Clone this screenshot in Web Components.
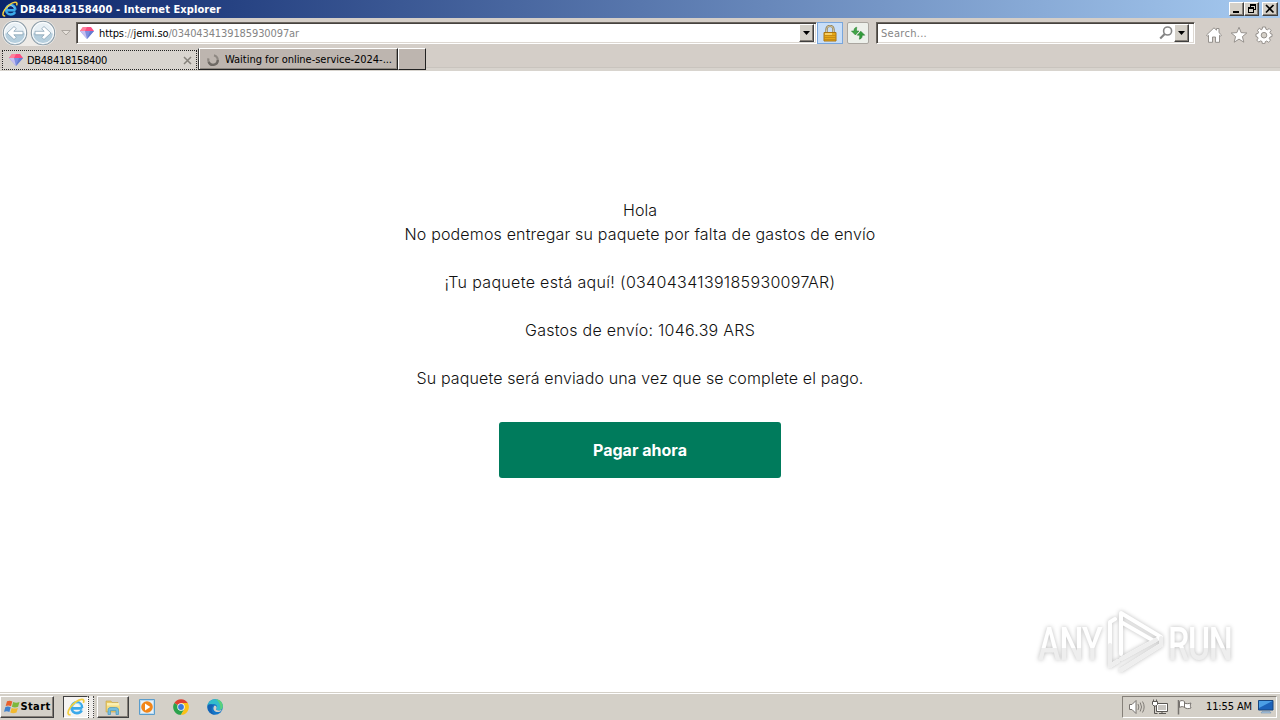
<!DOCTYPE html>
<html lang="es">
<head>
<meta charset="utf-8">
<title>DB48418158400 - Internet Explorer</title>
<style>
html, body { margin: 0; height: 100%; overflow: hidden; background: #fff; }
</style>
</head>
<body>
<desktop-screen></desktop-screen>
<script>
// ICONS {{{1

// Each entry is [viewBox, markup]
const ICONS = {
    ie: ['0 0 16 16', `
        <path d="M13.6 9.2H4.9M13.4 8.8c0-3-2-4.9-4.6-4.9S4 6 4 8.7s2 4.800 4.800 4.800c2 0 3.500-.9 4.300-2.400" fill="none" stroke="#3ba9ea" stroke-width="2.400"/>
        <path d="M5 7.700c.4-2 1.700-3 3.600-3s3.200 1 3.500 3" fill="none" stroke="#a4e4ff" stroke-width=".9"/>
        <path d="M3.200 14.800C.3 15.400.2 12.400 2.700 8.700 5.300 4.700 10 1.400 13 1.200c2-.1 2.400 1.300 1.500 3.200" fill="none" stroke="#f3ce3d" stroke-width="1.500"/>`],
    gem: ['0 0 16 14', `
        <path d="M4 1h8l3 4H1z" fill="#fb4d82"/><path d="M4 1 1 5h5l2-4z" fill="#ff7f9b"/>
        <path d="M1 5h14l-7 8z" fill="#7e8fe0"/><path d="M1 5h5l2 8z" fill="#c7bff0"/><path d="M11 5h4l-7 8z" fill="#657bd0"/>`],
    back: ['0 0 26 26', `
        <circle cx="13" cy="13" r="11.700" fill="#e8f0f5" stroke="#8a9aa5" stroke-width="1.100"/>
        <path d="M2.500 14a10.500 10.500 0 0 0 21 0c-5-3-15-3-21 0z" fill="#b5cedd"/>
        <circle cx="13" cy="13" r="10.500" fill="none" stroke="#fff" stroke-width="1"/>
        <path d="m5 13 7-6.500 2.400 2.300-2.600 2.500H21v3.500h-9.200l2.600 2.500L12 19.500z" fill="#fff" stroke="#8aa5b6" stroke-width=".8"/>`],
    down: ['0 0 10 6', '<path d="M.7.5h8.600L5 5z" fill="#e7e2dc" stroke="#aaa59f"/>'],
    caret: ['0 0 7 4', '<path d="M0 0h7L3.500 4z" fill="#000"/>'],
    lock: ['0 0 16 17', `
        <path d="M4.500 8V4.400a3.500 3.500 0 0 1 7 0V8" fill="none" stroke="#8b7a53" stroke-width="2.300"/>
        <path d="M4.500 8V4.400a3.500 3.500 0 0 1 7 0V8" fill="none" stroke="#e7dcb4" stroke-width=".8"/>
        <path d="M2 7.500h12v8.500H2z" fill="#e6a817" stroke="#aa7410"/><path d="M3 8.300h7v1.400H3z" fill="#ffe084"/>
        <path d="M2.500 10.500h11m-11 2h11m-11 2h11" stroke="#ba8014" stroke-width=".7"/>`],
    refresh: ['0 0 16 16', `
        <path d="M6.800 2.200C4.300 2.500 3.900 4.500 4 6H1.400l4 4L9 6H6.500c0-1.500 0-2.500.3-3.800z" fill="#42a448" stroke="#277d31" stroke-width=".5"/>
        <path d="M9.300 14.200c2.500-.3 3-2.300 2.900-4h2.600l-4-4-3.600 4h2.500c0 1.600 0 2.600-.4 4z" fill="#319c3b" stroke="#20752a" stroke-width=".5"/>`],
    search: ['0 0 16 16', `
        <circle cx="9.600" cy="6" r="4" fill="#fff" stroke="#858585" stroke-width="1.600"/>
        <path d="m6.700 9-4.500 4.500" stroke="#858585" stroke-width="2.200"/>`],
    home: ['0 0 18 18', '<path d="M1.500 9 9 1.800l2.500 2.400V2.500H14v4.200L16.500 9l-1 1.200-1-.9v7H10.500V11h-3v5.300h-4v-7l-1 .9z" fill="#fff" stroke="#8c8883" stroke-width=".9"/>'],
    star: ['0 0 18 18', '<path d="m9 1.300 2.100 5.300 5.700.4-4.400 3.600 1.400 5.600L9 13.100l-4.800 3.100 1.400-5.600L1.200 7l5.700-.4z" fill="#fff" stroke="#8c8883" stroke-width=".9"/>'],
    gear: ['0 0 18 18', `
        <path d="m7.500 1 3 0 .4 2.200 1.400.6 1.900-1.300 1.900 2-1.200 1.800.6 1.400L17 8v2.500l-2 .5-.7 1.500 1.200 1.800-2 1.900-1.800-1.200-1.400.6-.5 2H7.300L7 15.500l-1.500-.6-1.800 1.200-1.900-2L3 12.400 2.500 11 1 10.500V7.900l2-.4.600-1.400-1.200-1.800 2-1.900 1.800 1.300 1-.5z" fill="#fff" stroke="#8c8883" stroke-width=".9"/>
        <circle cx="9" cy="9.200" r="2.800" fill="#d4d0c8" stroke="#8c8883" stroke-width=".9"/>`],
    close: ['0 0 9 9', '<path d="m1 1 7 7m0-7L1 8" stroke="#85817b" stroke-width="1.500"/>'],
    spinner: ['0 0 14 14', `
        <path d="M8 2.300a4.800 4.800 0 1 1-5.500 3" fill="none" stroke="#8f8983" stroke-width="2.200"/>
        <path d="M11.800 7A4.800 4.800 0 0 1 2.600 9" fill="none" stroke="#6e6964" stroke-width="2.200"/>`],
    minimize: ['0 0 10 10', '<path d="M1 7h6v2H1z"/>'],
    restore: ['0 0 10 10', '<path d="M3 0h6v6H7V5h1V2H4v1H3z"/><path d="M1 3h6v6H1zm1 2v3h4V5z" fill-rule="evenodd"/>'],
    cross: ['0 0 10 10', '<path d="m1 1 7.500 7.500m0-7.500L1 8.500" stroke="#000" stroke-width="1.700"/>'],
    windows: ['0 0 17 16', `
        <path d="M3 2.300c2-1 3.800-.8 5.300.2L7 7.300C5.300 6.300 3.600 6.300 1.700 7z" fill="#e8602c"/>
        <path d="M9.200 3c2 1 4 1 6.300 0l-1.400 4.800c-2.200 1-4.300.9-6.200 0z" fill="#7db83c"/>
        <path d="M1.400 8c2-.9 3.700-.6 5.300.3L5.400 13C3.700 12 2 12 0 12.800z" fill="#3f82ce"/>
        <path d="M7.700 8.900c2 .9 4 .9 6.200 0l-1.400 4.700c-2.300 1-4.300 1-6.200 0z" fill="#f2b92e"/>`],
    explorer: ['0 0 18 16', `
        <path d="M2 2h5l1 1.500h6V13H2z" fill="#e8c864" stroke="#c7a545" stroke-width=".6"/>
        <path d="M3 4h12v8H3z" fill="#fbefb0"/><path d="M3 6.500h13V12H3z" fill="#f5dc83"/>
        <path d="M4 15.500V11c0-2 1.400-2.500 3-2.500h4.500c2 0 3 .8 3 2.500v4.500H12v-4H6.500v4z" fill="#74bddd" stroke="#4795bd" stroke-width=".7"/>`],
    player: ['0 0 16 16', `
        <path d="M.5.500h15v15H.500z" fill="#bcdaf0" stroke="#5a9dcc"/><path d="M2 2h12v12H2z" fill="#e6f1f9"/>
        <circle cx="8" cy="8" r="5.800" fill="#f28518"/><path d="m6 4.600 5.300 3.400L6 11.400z" fill="#fff"/>`],
    chrome: ['0 0 16 16', `
        <path d="M8 8 1.240 4.100A7.800 7.800 0 0 1 14.760 4.100L15 8z" fill="#df4030"/>
        <path d="M8 8h-.1L1.240 4.100A7.800 7.800 0 0 0 8 15.800l3.400-5.900z" fill="#2ba24c"/>
        <path d="M8 15.800A7.800 7.800 0 0 0 14.760 4.100H8L11.400 10z" fill="#fbc116"/>
        <circle cx="8" cy="8" r="3.700" fill="#fff"/><circle cx="8" cy="8" r="2.900" fill="#3b79dc"/>`],
    edge: ['0 0 16 16', `
        <circle cx="8" cy="8" r="7.800" fill="#1476c9"/>
        <path d="M.4 7C1.200 2.800 4.200.2 8.200.2c4.400 0 7.600 3.200 7.600 6.700 0 2.700-2 4.300-4.200 4.300-1.800 0-2.800-.7-2.200-1.500 1.700-2.500-.2-4.700-3-4.700C3.700 5 1.500 5.700.4 7z" fill="#32bccb"/>
        <path d="M9 .3c4.200.2 6.800 3.400 6.800 6.600 0 2-1 3.500-2.700 4C14 7 12.500 3 9 .3z" fill="#5bd17b"/>
        <path d="M9.300 9.800C8.600 10.700 10 11.600 12 11.500c1 0 2-.3 2.800-.8-.7 1.500-2 2.300-4 2.300-3 0-4.800-2-4.300-4.500.2-1 .7-1.600 1.300-1.900 1.600.3 2.400 1.800 1.500 3.200z" fill="#d4d0c8"/>
        <path d="M1 5.800c-1.400 5 2 9.800 7 10C4.500 14 3 9 6.500 6.500 4.700 5 2.500 4.800 1 5.800z" fill="#1662b2"/>`],
    volume: ['0 0 18 16', `
        <path d="M1.500 5.500h2.500L8 1.500v13l-4-4H1.500z" fill="#fff" stroke="#77736f"/>
        <path d="M10 5q1.700 3 0 6M12.200 3.500q2.700 4.500 0 9M14.500 2.500q3.300 5.500 0 11" fill="none" stroke="#807c77"/>`],
    network: ['0 0 18 16', `
        <path d="M4.500 4.500h11v8h-11z" fill="#fff" stroke="#5a5753"/><path d="M6 6h8v5H6z" fill="#c8c5c0"/>
        <path d="M7 14.500h7m-4-2v2M2.500 7v7.500h3" fill="none" stroke="#5a5753"/>
        <path d="M.5 2.500h5v3l-1.500 1.500h-2L.500 5.500z" fill="#fff" stroke="#5a5753"/>
        <path d="M1.500.5v2m3-2v2" stroke="#5a5753"/>`],
    flag: ['0 0 18 16', `
        <path d="M3.500 2.500c2-1.500 3.500-1 5 0v6c-1.500-1.200-3-1.200-5 0zM8.500 4c2 1 4 .8 6.500 0-.8 1.500-1 2.500 0 5-2.500 1-4.500.8-6.500-.5z" fill="#fff" stroke="#77736f"/>
        <path d="M2.500 1v14.500" stroke="#77736f" stroke-width="1.500"/>`],
    monitor: ['0 0 16 14', `
        <path d="M.5.500h14.500v9.500H.500z" fill="#1c62ba" stroke="#17447e"/><path d="M1 1h13.500L1 8z" fill="#4b9ee5"/>
        <path d="M4 11.500h8l1 1.500H3z" fill="#a6c2de" stroke="#698aab" stroke-width=".5"/>`],
};

// class UiIcon {{{1

class UiIcon extends HTMLElement {
    connectedCallback() {
        const [box, markup] = ICONS[this.getAttribute('name')];
        const [, , w, h] = box.split(' ');
        const width = this.getAttribute('width') || w;
        const height = this.getAttribute('height') || h;
        this.attachShadow({ mode: 'open' }).innerHTML = `
            <style>
            :host { display: block; flex: none; width: ${width}px; height: ${height}px; }
            svg { display: block; width: 100%; height: 100%; }
            </style>
            <svg viewBox="${box}">${markup}</svg>`;
    }
}

// class FitText {{{1

// One line of text, spaced so that it takes up the width attribute exactly
class FitText extends HTMLElement {
    connectedCallback() {
        this.attachShadow({ mode: 'open' }).innerHTML = `
            <style>
            :host { display: block; flex: none; width: ${this.getAttribute('width')}px; white-space: nowrap; }
            span { display: inline-block; }
            </style>
            <span><slot></slot></span>`;
        const span = this.shadowRoot.querySelector('span');
        const spare = this.getAttribute('width') - span.getBoundingClientRect().width;
        span.style.letterSpacing = `${spare / this.textContent.length}px`;
    }
}

// class BevelButton {{{1

class BevelButton extends HTMLElement {
    connectedCallback() {
        this.attachShadow({ mode: 'open' }).innerHTML = `
            <style>
            :host {
                display: flex;
                flex: none;
                box-sizing: border-box;
                align-items: center;
                justify-content: center;
                background: #d4d0c8;
                border: 1px solid;
                border-color: #fff #404040 #404040 #fff;
                box-shadow: inset -1px -1px #868079;
            }
            </style>
            <slot></slot>`;
    }
}

// class TitleBar {{{1

class TitleBar extends HTMLElement {
    connectedCallback() {
        this.attachShadow({ mode: 'open' }).innerHTML = `
            <style>
            :host {
                display: flex;
                box-sizing: border-box;
                height: 18px;
                padding: 0 2px;
                align-items: center;
                color: #fff;
                background: linear-gradient(to right, #0a246a, #a6caf0);
                font-weight: bold;
            }
            fit-text { margin: 1px 0 0 2px; }
            .buttons { display: flex; margin-left: auto; }
            bevel-button { width: 15px; height: 14px; }
            bevel-button:last-child { margin-left: 3px; width: 16px; }
            </style>
            <ui-icon name="ie" width="16" height="16"></ui-icon>
            <fit-text width="201">DB48418158400 - Internet Explorer</fit-text>
            <div class="buttons">
                <bevel-button><ui-icon name="minimize"></ui-icon></bevel-button>
                <bevel-button><ui-icon name="restore"></ui-icon></bevel-button>
                <bevel-button><ui-icon name="cross"></ui-icon></bevel-button>
            </div>`;
    }
}

// class AddressBar {{{1

class AddressBar extends HTMLElement {
    connectedCallback() {
        this.attachShadow({ mode: 'open' }).innerHTML = `
            <style>
            :host {
                display: flex;
                box-sizing: border-box;
                height: 29px;
                padding: 1px 7px 0 2px;
                align-items: center;
            }
            .nav {
                display: flex;
                gap: 2px;
                background: #eeebe7;
                border-radius: 13px;
            }
            .forward { transform: scaleX(-1); }
            .field {
                display: flex;
                flex: none;
                box-sizing: border-box;
                height: 22px;
                align-items: center;
                background: #fff;
                border: 1px solid;
                border-color: #69645e #fff #fff #69645e;
                box-shadow: inset 1px 1px #46423e, inset -1px -1px #ddd8d2;
                color: #858585;
            }
            .url { width: 741px; margin-left: 5px; padding: 0 2px; }
            .search { width: 319px; margin-left: 7px; padding: 0 5px 0 4px; }
            .url fit-text { margin: 2px 0 0 4px; }
            .search fit-text { margin-top: 2px; }
            .host { color: #000; }
            bevel-button { width: 15px; height: 18px; }
            .url bevel-button { margin-left: auto; }
            .tool {
                display: flex;
                box-sizing: border-box;
                height: 22px;
                align-items: center;
                justify-content: center;
                border: 1px solid #79a6dc;
                background: #c8def8;
            }
            .lock { width: 26px; }
            .refresh { width: 22px; margin-left: 4px; border-color: #aaa6a0; border-radius: 2px; background: #edf0eb; }
            .commands { display: flex; gap: 7px; margin: 3px 0 0 auto; }
            </style>
            <div class="nav">
                <ui-icon name="back"></ui-icon>
                <ui-icon class="forward" name="back"></ui-icon>
            </div>
            <ui-icon name="down" style="margin-left: 5px"></ui-icon>
            <div class="field url">
                <ui-icon name="gem"></ui-icon>
                <fit-text width="200"><span class="host">https</span>://<span class="host">jemi.so</span>/0340434139185930097ar</fit-text>
                <bevel-button><ui-icon name="caret"></ui-icon></bevel-button>
            </div>
            <div class="tool lock"><ui-icon name="lock"></ui-icon></div>
            <div class="tool refresh"><ui-icon name="refresh"></ui-icon></div>
            <div class="field search">
                <fit-text width="46">Search...</fit-text>
                <ui-icon name="search" style="margin-left: auto"></ui-icon>
                <bevel-button><ui-icon name="caret"></ui-icon></bevel-button>
            </div>
            <div class="commands">
                <ui-icon name="home"></ui-icon>
                <ui-icon name="star"></ui-icon>
                <ui-icon name="gear"></ui-icon>
            </div>`;
    }
}

// class TabStrip {{{1

class TabStrip extends HTMLElement {
    connectedCallback() {
        this.attachShadow({ mode: 'open' }).innerHTML = `
            <style>
            :host {
                display: flex;
                box-sizing: border-box;
                height: 24px;
                padding: 1px 1px 1px;
                background: linear-gradient(#d4cec8 20px, #c9c4be 20px, #c9c4be 21px, #d8d4ce 21px);
            }
            .tab { display: flex; box-sizing: border-box; height: 22px; align-items: center; }
            .current {
                width: 195px;
                height: 20px;
                margin-top: 2px;
                margin-left: 1px;
                padding: 0 4px 0 5px;
                border: 1px dotted #222;
                background: #d8d4cf;
            }
            .current ui-icon:last-child { margin-left: auto; }
            .other {
                width: 200px;
                margin-left: 1px;
                padding: 1px 0 0 7px;
                background: #bdb5af;
                border: 1px solid;
                border-color: #fff #222 #222 #333;
                box-shadow: inset 1px 0 #fff, inset -1px -1px #8c867f;
            }
            .new {
                width: 28px;
                background: #bdb5af;
                border: 1px solid;
                border-color: #fff #222 #222 #fff;
            }
            .current fit-text { margin: 1px 0 0 3px; }
            .other fit-text { margin: 1px 0 0 5px; }
            </style>
            <div class="tab current">
                <ui-icon name="gem"></ui-icon>
                <fit-text width="80">DB48418158400</fit-text>
                <ui-icon name="close"></ui-icon>
            </div>
            <div class="tab other">
                <ui-icon name="spinner"></ui-icon>
                <fit-text width="167">Waiting for online-service-2024-...</fit-text>
            </div>
            <div class="tab new"></div>`;
    }
}

// class DeliveryNotice {{{1

class DeliveryNotice extends HTMLElement {
    connectedCallback() {
        this.attachShadow({ mode: 'open' }).innerHTML = `
            <style>
            :host {
                display: flex;
                flex-flow: column nowrap;
                box-sizing: border-box;
                flex: 1;
                padding-top: 127px;
                align-items: center;
                background: #fff;
                color: #111;
                font: 350 16px/24px Inter, sans-serif;
            }
            fit-text.gap { margin-top: 24px; }
            button {
                display: flex;
                width: 282px;
                height: 56px;
                margin-top: 32px;
                padding: 0;
                align-items: center;
                justify-content: center;
                border: 0;
                border-radius: 3px;
                background: #007b5c;
                color: #fff;
                font: bold 16px/24px Inter, sans-serif;
            }
            </style>
            <fit-text width="34">Hola</fit-text>
            <fit-text width="471">No podemos entregar su paquete por falta de gastos de envío</fit-text>
            <fit-text class="gap" width="391">¡Tu paquete está aquí! (0340434139185930097AR)</fit-text>
            <fit-text class="gap" width="230">Gastos de envío: 1046.39 ARS</fit-text>
            <fit-text class="gap" width="447">Su paquete será enviado una vez que se complete el pago.</fit-text>
            <button><fit-text width="94">Pagar ahora</fit-text></button>`;
    }
}

// class AnyrunMark {{{1

class AnyrunMark extends HTMLElement {
    connectedCallback() {
        this.attachShadow({ mode: 'open' }).innerHTML = `
            <style>
            :host { display: block; width: 210px; height: 76px; }
            svg { display: block; }
            text {
                font: 500 47px Roboto, sans-serif;
                fill: url(#shade);
            }
            .all { filter: drop-shadow(0 0 2px #bcbcbc); }
            </style>
            <svg width="210" height="76" viewBox="0 0 210 76">
                <defs>
                    <linearGradient id="shade" x2="0" y2="1">
                        <stop offset=".59" stop-color="#fff"/>
                        <stop offset=".59" stop-color="#eee"/>
                    </linearGradient>
                </defs>
                <g class="all">
                    <text transform="translate(8 55.500) scale(.72 1)" textLength="90">ANY</text>
                    <text transform="translate(138 55.500) scale(.72 1)" textLength="90">RUN</text>
                    <g fill="none" stroke-linejoin="round" stroke-linecap="round" stroke-width="4">
                        <path d="M91 50V9l40 24-40 22" stroke="#fff"/>
                        <path d="m91 18 33 19M85 15l-5 3v44l8-5M91 66l40-25" stroke="#fff"/>
                        <path d="M80 41v21l8-5M91 66l40-25v-7M91 55l35-19" stroke="#eee"/>
                    </g>
                </g>
            </svg>`;
    }
}

// class TaskBar {{{1

class TaskBar extends HTMLElement {
    connectedCallback() {
        this.attachShadow({ mode: 'open' }).innerHTML = `
            <style>
            :host {
                display: flex;
                box-sizing: border-box;
                height: 28px;
                padding: 1px 3px 0 0;
                align-items: center;
                background: #d4d0c8;
                border-top: 1px solid #d4d0c8;
                box-shadow: inset 0 1px #fff;
            }
            .start { width: 54px; height: 22px; font-weight: bold; }
            .active {
                display: flex;
                box-sizing: border-box;
                width: 25px;
                height: 22px;
                margin-left: 9px;
                align-items: center;
                justify-content: center;
                border: 1px solid;
                border-color: #404040 #fff #fff #404040;
                background: #f6f4f2;
            }
            .stack {
                box-sizing: border-box;
                width: 6px;
                height: 22px;
                border: dotted #444;
                border-width: 0 1px;
                background: #efedea;
            }
            .explorer { width: 32px; height: 22px; margin-left: 3px; }
            .launch { display: flex; gap: 18px; margin-left: 10px; }
            .tray {
                display: flex;
                box-sizing: border-box;
                width: 155px;
                height: 22px;
                margin-left: auto;
                padding: 0 1px 0 5px;
                gap: 6px;
                align-items: center;
                border: 1px solid;
                border-color: #858079 #fff #fff #858079;
            }
            .tray fit-text { margin-left: 6px; }
            </style>
            <bevel-button class="start">
                <ui-icon name="windows"></ui-icon><fit-text width="30">Start</fit-text>
            </bevel-button>
            <div class="active"><ui-icon name="ie" width="18" height="18"></ui-icon></div>
            <div class="stack"></div>
            <bevel-button class="explorer"><ui-icon name="explorer"></ui-icon></bevel-button>
            <div class="launch">
                <ui-icon name="player"></ui-icon>
                <ui-icon name="chrome"></ui-icon>
                <ui-icon name="edge"></ui-icon>
            </div>
            <div class="tray">
                <ui-icon name="volume"></ui-icon>
                <ui-icon name="network"></ui-icon>
                <ui-icon name="flag"></ui-icon>
                <fit-text width="46">11:55 AM</fit-text>
                <ui-icon name="monitor"></ui-icon>
            </div>`;
    }
}

// class DesktopScreen {{{1

class DesktopScreen extends HTMLElement {
    connectedCallback() {
        this.attachShadow({ mode: 'open' }).innerHTML = `
            <style>
            :host {
                display: flex;
                flex-flow: column nowrap;
                position: relative;
                width: 1280px;
                height: 720px;
                overflow: hidden;
                background: #d4cec8;
                color: #000;
                font: 11px/14px "DejaVu Sans Condensed", "DejaVu Sans", sans-serif;
            }
            /* the watermark floats over the page */
            anyrun-mark { position: absolute; left: 1030px; top: 604px; }
            </style>
            <title-bar></title-bar>
            <address-bar></address-bar>
            <tab-strip></tab-strip>
            <delivery-notice></delivery-notice>
            <task-bar></task-bar>
            <anyrun-mark></anyrun-mark>`;
    }
}

// }}}

customElements.define('ui-icon', UiIcon);
customElements.define('fit-text', FitText);
customElements.define('bevel-button', BevelButton);
customElements.define('title-bar', TitleBar);
customElements.define('address-bar', AddressBar);
customElements.define('tab-strip', TabStrip);
customElements.define('delivery-notice', DeliveryNotice);
customElements.define('anyrun-mark', AnyrunMark);
customElements.define('task-bar', TaskBar);
customElements.define('desktop-screen', DesktopScreen);
</script>
</body>
</html>
